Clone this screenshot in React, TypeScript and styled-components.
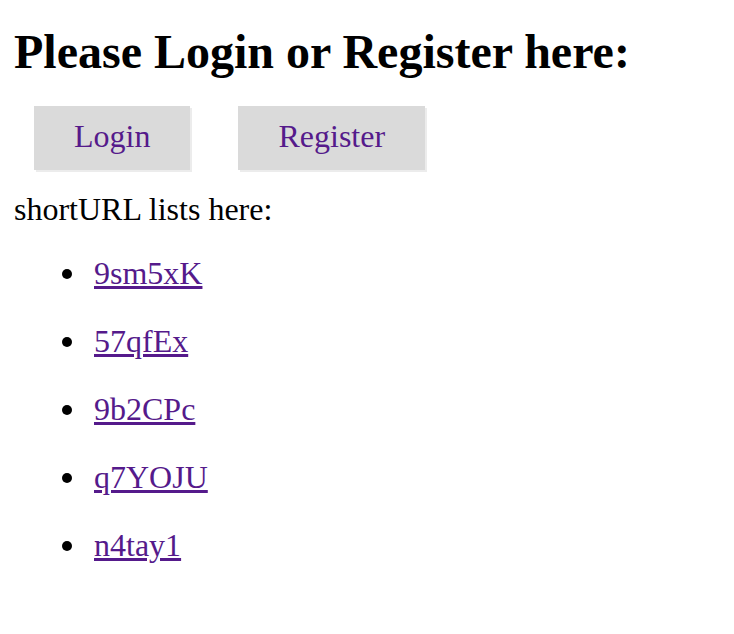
import React from "react";
import styled, { createGlobalStyle } from "styled-components";

const GlobalStyle = createGlobalStyle`
  html, body {
    margin: 0;
    padding: 0;
    background: #ffffff;
  }
  body {
    font-family: "Liberation Serif", "Times New Roman", Times, serif;
    font-size: 32px;
    color: #000000;
  }
`;

const Page = styled.main`
  display: flex;
  flex-direction: column;
  align-items: flex-start;
  padding: 0 14px;
`;

const Title = styled.h2`
  margin: 24px 0 0;
  font-size: 48px;
  line-height: 56px;
  font-weight: bold;
`;

const ButtonRow = styled.nav`
  display: flex;
  gap: 48px;
  margin: 26px 0 0 20px;
`;

const NavButton = styled.a`
  display: block;
  padding: 12px 40px 16px;
  line-height: 36px;
  background: #dadada;
  box-shadow: 2px 2px 0 #ececec;
  color: #551a8b;
  text-decoration: none;
`;

const Caption = styled.p`
  margin: 21px 0 0;
  line-height: 36px;
`;

const UrlList = styled.ul`
  margin: 28px 0 0;
  padding: 0 0 0 48px;
  list-style: none;
`;

const UrlItem = styled.li`
  display: flex;
  align-items: flex-start;
  line-height: 36px;
  margin: 0 0 32px;

  &::before {
    content: "";
    flex: none;
    width: 10px;
    height: 10px;
    margin: 14px 22px 0 0;
    border-radius: 50%;
    background: #000000;
  }
`;

const UrlLink = styled.a`
  color: #551a8b;
  text-decoration: underline;
`;

const codes = ["9sm5xK", "57qfEx", "9b2CPc", "q7YOJU", "n4tay1"];

export default function App() {
  return (
    <>
      <GlobalStyle />
      <Page>
        <Title>Please Login or Register here:</Title>
        <ButtonRow>
          <NavButton href="#login">Login</NavButton>
          <NavButton href="#register">Register</NavButton>
        </ButtonRow>
        <Caption>shortURL lists here:</Caption>
        <UrlList>
          {codes.map((c) => (
            <UrlItem key={c}>
              <UrlLink href={`#${c}`}>{c}</UrlLink>
            </UrlItem>
          ))}
        </UrlList>
      </Page>
    </>
  );
}
